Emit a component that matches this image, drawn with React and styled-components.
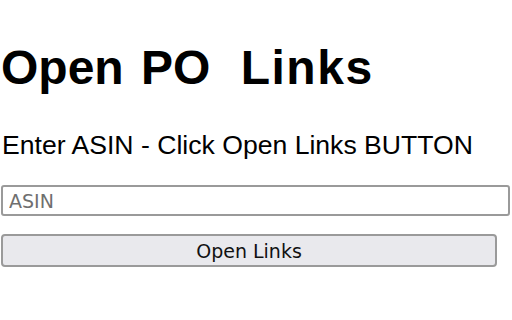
import React from "react";
import styled, { createGlobalStyle } from "styled-components";

const GlobalStyle = createGlobalStyle`
    html, body {
        margin: 0;
        padding: 0;
        background: #ffffff;
    }
`;

const Page = styled.div`
    display: flex;
    flex-direction: column;
    padding: 44px 2px 0 1px;
    font-family: "Liberation Sans", Arial, sans-serif;
    color: #000;
`;

const Title = styled.h1`
    margin: 0;
    font-size: 48px;
    line-height: 48px;
    font-weight: bold;
    word-spacing: 4px;
`;

// the gap before "Links" is wider than a plain space in the original
const WideGap = styled.span`
    display: inline-block;
    width: ${p => p.size}px;
`;

const Links = styled.span`
    letter-spacing: 1.5px;
`;

const Hint = styled.p`
    margin: 40px 0 0 1px;
    font-size: 26.6px;
    line-height: 26px;
`;

const AsinInput = styled.input`
    box-sizing: border-box;
    margin-top: 27px;
    width: 509px;
    height: 31px;
    padding: 0 6px;
    border: 2px solid #9a9a9a;
    border-radius: 3px;
    font-family: "DejaVu Sans", Verdana, sans-serif;
    font-size: 19px;
    color: #000;
    outline: none;

    &::placeholder {
        color: #6f6f6f;
    }
`;

const OpenButton = styled.button`
    box-sizing: border-box;
    margin-top: 18px;
    width: 496px;
    height: 33px;
    border: 2px solid #9a9a9a;
    border-radius: 4px;
    background: #e9e9ed;
    font-family: "DejaVu Sans", Verdana, sans-serif;
    font-size: 19px;
    color: #111;
    cursor: pointer;
`;

export default function App() {
    return (
        <>
            <GlobalStyle />
            <Page>
                <Title>
                    Open PO <WideGap size={13} />
                    <Links>Links</Links>
                </Title>
                <Hint>Enter ASIN - Click Open Links BUTTON</Hint>
                <AsinInput type="text" placeholder="ASIN" />
                <OpenButton>Open Links</OpenButton>
            </Page>
        </>
    );
}
